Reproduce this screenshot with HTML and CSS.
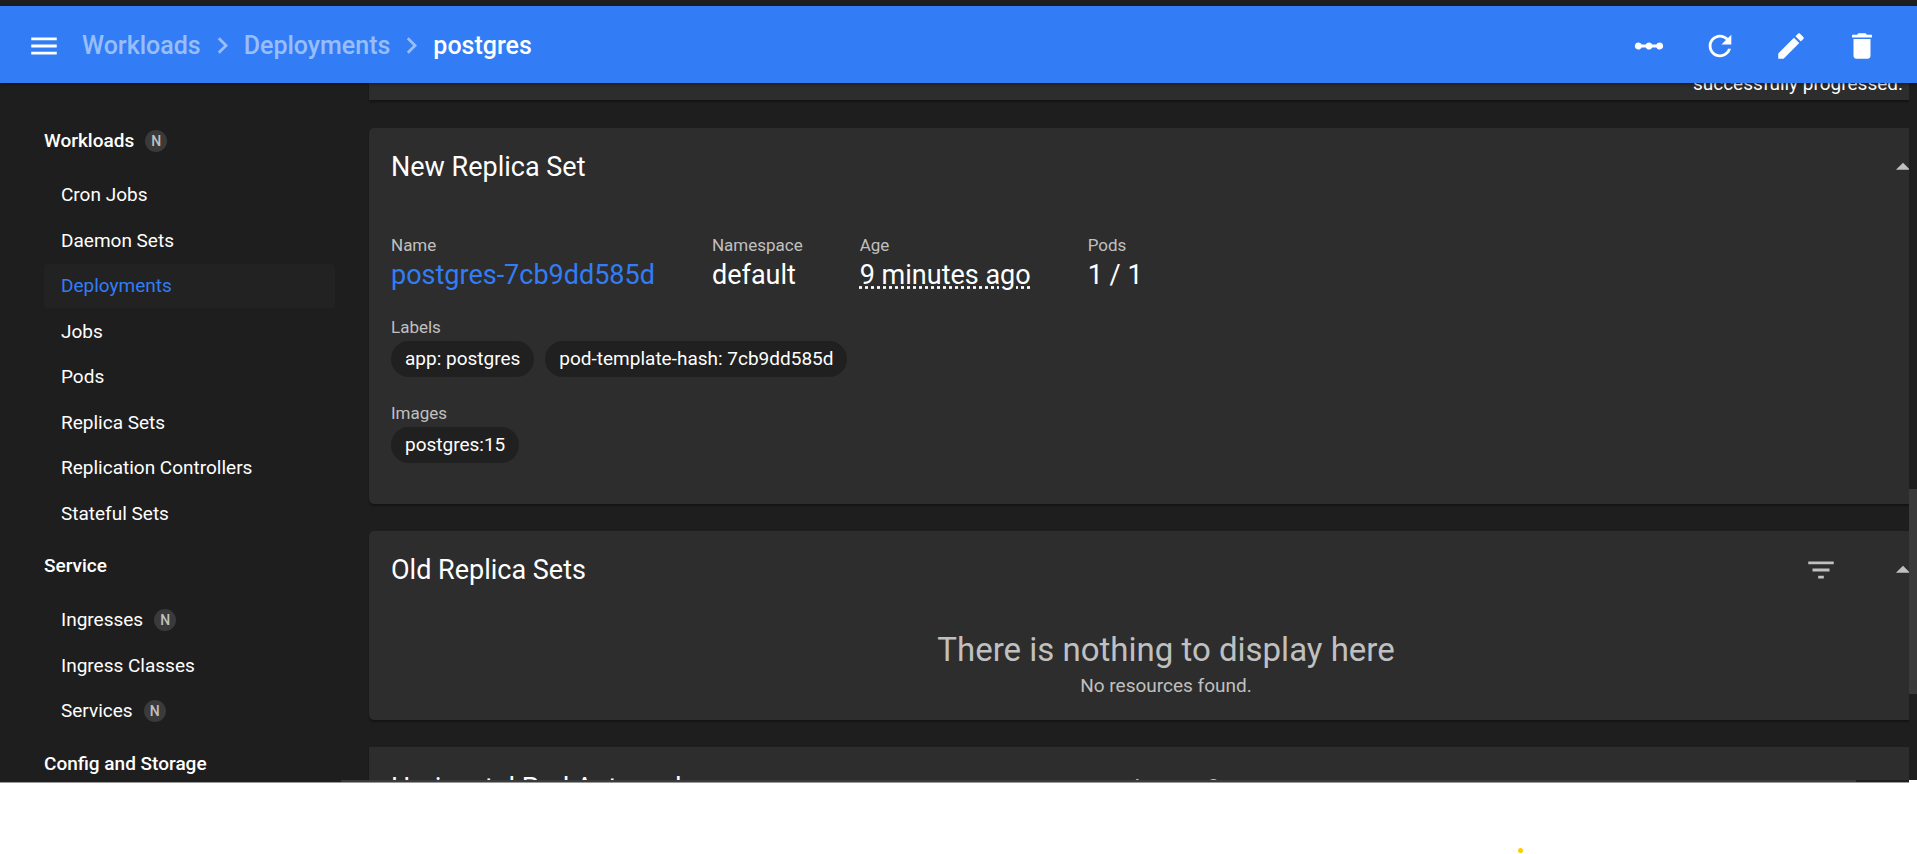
FILE: index.html
```html
<!DOCTYPE html>
<html lang="en">
<head>
<meta charset="utf-8">
<title>postgres - Kubernetes Dashboard</title>
<link rel="stylesheet" href="styles.css">
</head>
<body>
<div class="app">
  <header class="toolbar">
    <button class="icon-button menu-button" aria-label="Toggle navigation">
      <svg class="icon" viewBox="0 0 24 24"><path d="M3 18h18v-2H3v2zm0-5h18v-2H3v2zm0-7v2h18V6H3z"/></svg>
    </button>
    <nav class="breadcrumbs" aria-label="Breadcrumbs">
      <a class="crumb" href="#workloads">Workloads</a>
      <svg class="crumb-arrow" viewBox="0 0 24 24"><path d="M10 6 8.590 7.410 13.170 12l-4.580 4.590L10 18l6-6z"/></svg>
      <a class="crumb" href="#deployments">Deployments</a>
      <svg class="crumb-arrow" viewBox="0 0 24 24"><path d="M10 6 8.590 7.410 13.170 12l-4.580 4.590L10 18l6-6z"/></svg>
      <span class="crumb current">postgres</span>
    </nav>
    <div class="actions">
      <button class="icon-button" aria-label="Scale">
        <svg class="icon" viewBox="0 0 24 24"><path d="M19.500 9.500c-1.030 0-1.900.620-2.290 1.500h-2.920c-.390-.880-1.260-1.500-2.290-1.500s-1.900.620-2.290 1.500H6.790c-.390-.880-1.260-1.500-2.290-1.500C3.120 9.500 2 10.620 2 12s1.120 2.500 2.500 2.500c1.030 0 1.900-.620 2.290-1.500h2.920c.390.880 1.260 1.500 2.290 1.500s1.900-.620 2.290-1.500h2.920c.390.880 1.260 1.500 2.290 1.500 1.380 0 2.500-1.120 2.500-2.500s-1.120-2.500-2.500-2.500z"/></svg>
      </button>
      <button class="icon-button" aria-label="Restart">
        <svg class="icon" viewBox="0 0 24 24"><path d="M17.650 6.350C16.200 4.900 14.210 4 12 4c-4.420 0-7.990 3.580-7.990 8s3.570 8 7.990 8c3.730 0 6.840-2.550 7.730-6h-2.080c-.820 2.330-3.040 4-5.650 4-3.310 0-6-2.690-6-6s2.690-6 6-6c1.660 0 3.140.690 4.220 1.780L13 11h7V4l-2.350 2.350z"/></svg>
      </button>
      <button class="icon-button" aria-label="Edit">
        <svg class="icon" viewBox="0 0 24 24"><path d="M3 17.250V21h3.750L17.810 9.940l-3.750-3.750L3 17.250zM20.710 7.040c.390-.390.390-1.020 0-1.410l-2.340-2.340c-.390-.390-1.020-.390-1.410 0l-1.830 1.830 3.750 3.750 1.830-1.830z"/></svg>
      </button>
      <button class="icon-button" aria-label="Delete">
        <svg class="icon" viewBox="0 0 24 24"><path d="M6 19c0 1.100.900 2 2 2h8c1.100 0 2-.900 2-2V7H6v12zM19 4h-3.500l-1-1h-5l-1 1H5v2h14V4z"/></svg>
      </button>
    </div>
  </header>
  <div class="body">
    <nav class="sidebar" aria-label="Resources">
      <a class="group" href="#workloads">Workloads <span class="badge">N</span></a>
      <ul class="items">
        <li><a class="item" href="#cronjobs">Cron Jobs</a></li>
        <li><a class="item" href="#daemonsets">Daemon Sets</a></li>
        <li><a class="item active" href="#deployments">Deployments</a></li>
        <li><a class="item" href="#jobs">Jobs</a></li>
        <li><a class="item" href="#pods">Pods</a></li>
        <li><a class="item" href="#replicasets">Replica Sets</a></li>
        <li><a class="item" href="#controllers">Replication Controllers</a></li>
        <li><a class="item" href="#statefulsets">Stateful Sets</a></li>
      </ul>
      <a class="group" href="#service">Service</a>
      <ul class="items">
        <li><a class="item" href="#ingresses">Ingresses <span class="badge">N</span></a></li>
        <li><a class="item" href="#ingressclasses">Ingress Classes</a></li>
        <li><a class="item" href="#services">Services <span class="badge">N</span></a></li>
      </ul>
      <a class="group" href="#config">Config and Storage</a>
    </nav>
    <main class="content">
      <section class="card conditions"><p class="message">successfully progressed.</p></section>
      <section class="card">
        <div class="card-head">
          <h2 class="card-title">New Replica Set</h2>
          <button class="collapse" aria-label="Collapse New Replica Set"><svg class="icon" viewBox="0 0 24 24"><path d="m7 14 5-5 5 5z"/></svg></button>
        </div>
        <div class="details">
          <dl class="properties">
            <div><dt class="label">Name</dt><dd class="value"><a class="link" href="#postgres-7cb9dd585d">postgres-7cb9dd585d</a></dd></div>
            <div><dt class="label">Namespace</dt><dd class="value">default</dd></div>
            <div><dt class="label">Age</dt><dd class="value"><span class="relative-time">9 minutes ago</span></dd></div>
            <div><dt class="label">Pods</dt><dd class="value">1 / 1</dd></div>
          </dl>
          <div class="chip-group">
            <div class="label">Labels</div>
            <div class="chips"><span class="chip">app: postgres</span><span class="chip">pod-template-hash: 7cb9dd585d</span></div>
          </div>
          <div class="chip-group">
            <div class="label">Images</div>
            <div class="chips"><span class="chip">postgres:15</span></div>
          </div>
        </div>
      </section>
      <section class="card">
        <div class="card-head">
          <h2 class="card-title">Old Replica Sets</h2>
          <button class="filter" aria-label="Filter"><svg class="icon" viewBox="0 0 24 24"><path d="M10 18h4v-2h-4v2zM3 6v2h18V6H3zm3 7h12v-2H6v2z"/></svg></button>
          <button class="collapse" aria-label="Collapse Old Replica Sets"><svg class="icon" viewBox="0 0 24 24"><path d="m7 14 5-5 5 5z"/></svg></button>
        </div>
        <div class="empty">
          <p class="empty-title">There is nothing to display here</p>
          <p class="empty-text">No resources found.</p>
        </div>
      </section>
      <section class="card autoscalers">
        <h2 class="card-title">Horizontal Pod Autoscalers</h2>
        <span class="count">Items: 0</span>
      </section>
      <div class="hscroll"><div class="hthumb"></div></div>
    </main>
    <div class="vscroll"><div class="vthumb"></div></div>
  </div>
</div>
<footer class="page-end"><span class="dot"></span></footer>
</body>
</html>
```
FILE: styles.css
```css
* { box-sizing: border-box; }

body {
  margin: 0;
  height: 100vh;
  display: flex;
  flex-direction: column;
  overflow: hidden;
  background: #fff;
  color: #fff;
  font: 400 19px/28px Roboto, sans-serif;
}

a { color: inherit; text-decoration: none; }
h2, p, ul, dl, dd { margin: 0; padding: 0; }
ul { list-style: none; }
button { padding: 0; border: 0; background: none; color: inherit; display: flex; cursor: pointer; }
svg { display: block; fill: currentColor; flex: none; }
.icon { width: 34px; height: 34px; }

.app {
  flex: 1;
  min-height: 0;
  display: flex;
  flex-direction: column;
  background: #1e1e1e;
  padding-top: 6px;
}

.toolbar {
  flex: none;
  height: 77px;
  display: flex;
  align-items: center;
  padding: 2px 38px 0 27px;
  background: #327df5;
  box-shadow: 0 1px 3px rgba(0, 0, 0, 0.5);
  z-index: 1;
}
.breadcrumbs { display: flex; align-items: center; margin-left: 21px; font-size: 25px; font-weight: 500; }
.crumb { color: rgba(255, 255, 255, 0.5); }
.crumb.current { color: #fff; }
.crumb-arrow { width: 33px; height: 33px; margin: 0 5px; color: rgba(255, 255, 255, 0.5); }
.actions { display: flex; gap: 37px; margin-left: auto; }

.body { flex: 1; min-height: 0; display: flex; }

.sidebar { flex: none; width: 341px; padding: 36px 6px 0 44px; overflow: hidden; border-bottom: 1px solid #999; }
.group { display: flex; align-items: center; height: 44px; font-weight: 500; }
.items { padding: 10px 0 7px; }
.item { display: flex; align-items: center; height: 44px; margin-bottom: 1px; padding-left: 17px; border-radius: 4px; }
li:nth-child(odd) .item { margin-bottom: 2px; }
.item.active { color: #327df5; background: #222; }
.badge {
  width: 22px;
  height: 22px;
  margin-left: 11px;
  border-radius: 50%;
  background: #3a3a3a;
  color: #c0c0c0;
  font-size: 14px;
  font-weight: 500;
  line-height: 23px;
  text-align: center;
}

.content {
  flex: 1;
  min-width: 0;
  display: flex;
  flex-direction: column;
  overflow: hidden;
  position: relative;
  padding-left: 28px;
  border-bottom: 1px solid #999;
}
/* Cards run past the right edge of the scrolling pane. */
.card {
  flex: none;
  margin: 0 -54px 27px 0;
  background: #2d2d2d;
  border-radius: 5px;
  box-shadow: 0 2px 2px rgba(0, 0, 0, 0.35);
}
.conditions { height: 17px; display: flex; align-items: flex-end; justify-content: flex-end; padding: 0 60px 2px; margin-bottom: 28px; border-radius: 0; }
.card-head { display: flex; align-items: center; height: 77px; padding-left: 22px; }
.card-title { font-size: 27px; line-height: 32px; font-weight: 400; }
.collapse { margin-left: auto; margin-right: 43px; color: #c0c0c0; }
.filter { margin-left: auto; color: #c0c0c0; }
.filter + .collapse { margin-left: 48px; }

.details { padding: 28px 22px 41px; }
.properties { display: flex; gap: 57px; margin-bottom: 24px; }
.label { margin-bottom: 2px; color: #c0c0c0; font-size: 17px; line-height: 24px; }
.value { font-size: 27px; line-height: 32px; }
.link { color: #327df5; }
.relative-time { text-decoration: underline dotted; }
.chip-group + .chip-group { margin-top: 24px; }
.chips { display: flex; gap: 11px; }
.chip { height: 36px; padding: 0 14px; border-radius: 18px; background: #202020; line-height: 36px; }

.empty { padding: 22px 0 20px; text-align: center; color: #c0c0c0; }
.empty-title { margin-bottom: 2px; font-size: 33px; line-height: 40px; }

.autoscalers { display: grid; grid-template-columns: 1fr auto 1fr; align-items: center; padding: 25px 22px 22px; margin-bottom: 0; border-radius: 0; }
.count { padding-left: 22px; color: #c0c0c0; font-size: 24px; }

.hscroll { position: absolute; left: 0; right: 0; bottom: 0; height: 2px; background: #1e1e1e; }
.hthumb { width: calc(100% - 53px); height: 2px; background: #3a3a3a; }
.vscroll { flex: none; width: 8px; background: #1e1e1e; padding-top: 406px; border-bottom: 3px solid #fff; }
.vthumb { height: 205px; background: #3a3a3a; }

.page-end { flex: none; height: 71px; display: flex; align-items: flex-end; justify-content: flex-end; padding: 0 394px 1px 0; }
.dot { width: 5px; height: 5px; border-radius: 50%; background: #fc0; }
```
